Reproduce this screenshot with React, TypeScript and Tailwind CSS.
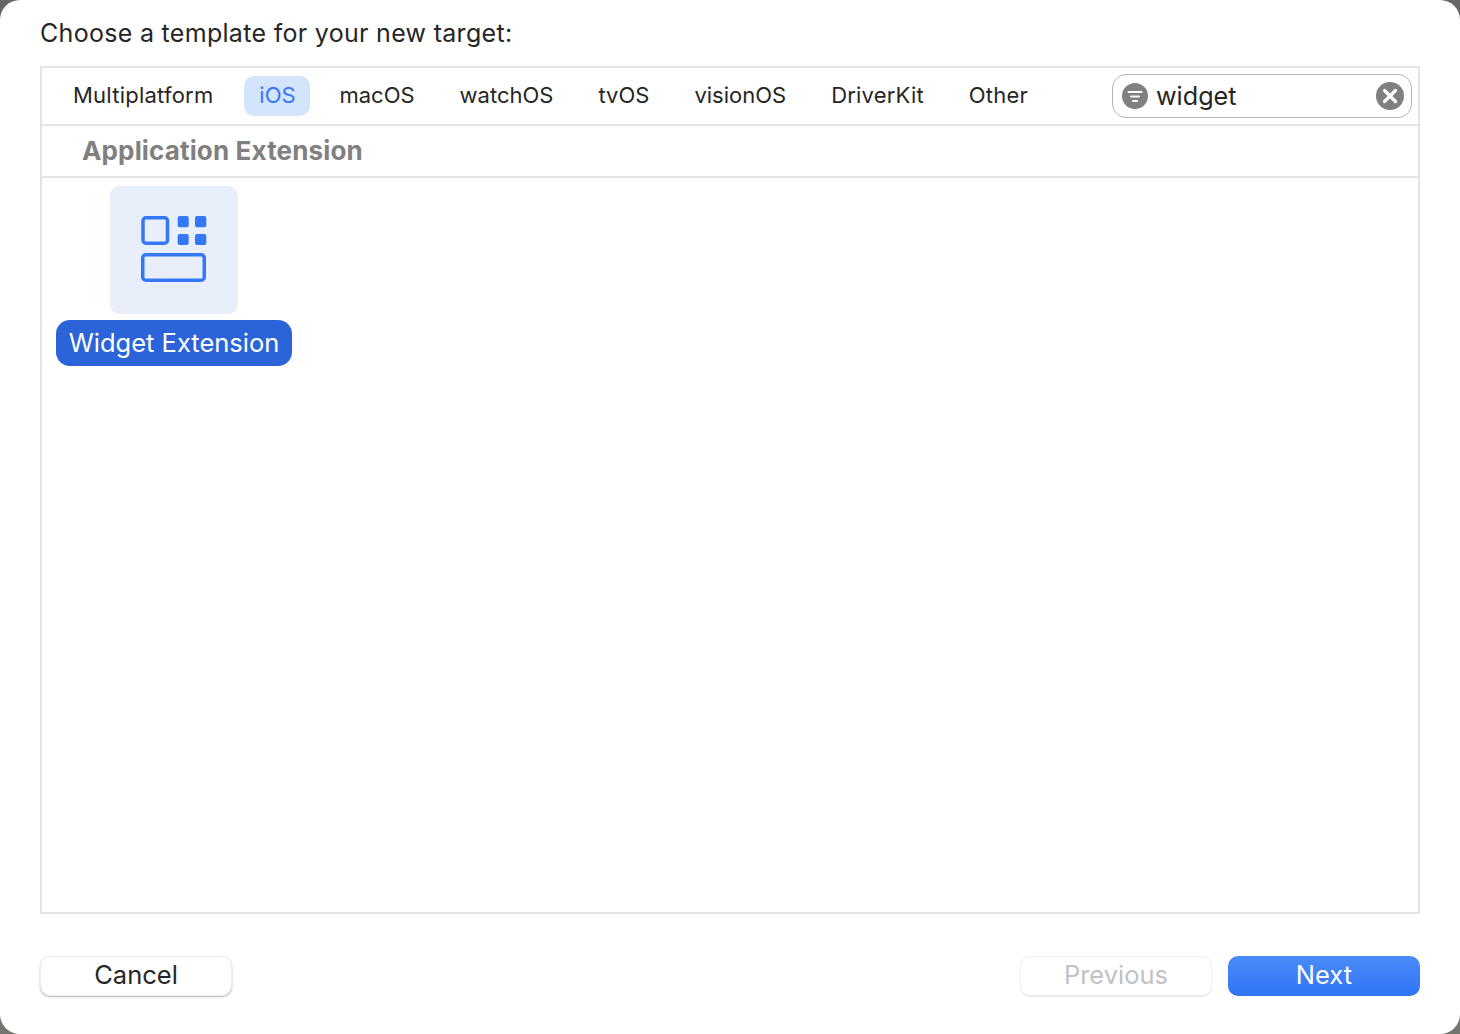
const tabs = ["Multiplatform", "iOS", "macOS", "watchOS", "tvOS", "visionOS", "DriverKit", "Other"];

export default function App() {
  return (
    <div className="h-[1034px] w-[1460px] overflow-hidden bg-gradient-to-b from-[#666666] to-[#77756f] font-['Inter','Liberation_Sans',sans-serif] text-[#262626]">
      <div className="flex h-full flex-col rounded-[20px] bg-white px-10 pb-[38px] pt-[17px]">
        <h1 className="h-[33px] text-[25px] font-normal leading-[33px] tracking-[0.3px]">Choose a template for your new target:</h1>
        <div className="mt-[16px] flex min-h-0 flex-1 flex-col border-2 border-[#e4e4e4]">
          <div className="flex h-[58px] shrink-0 items-center border-b-2 border-[#e4e4e4] pl-4 pr-[6px]">
            <nav className="flex gap-[15px]">
              {tabs.map((t) => (
                <span
                  key={t}
                  className={
                    t === "iOS"
                      ? "-mr-[1px] ml-[1px] flex h-10 w-[66px] items-center justify-center rounded-[10px] bg-[#d4e4fd] pb-[2px] text-[22px] text-[#3478f6]"
                      : t === "Multiplatform"
                        ? "flex h-10 items-center px-[15px] pb-[2px] text-[22px] tracking-[0.23px]"
                        : t === "DriverKit" || t === "Other"
                          ? "flex h-10 items-center px-[15px] pb-[2px] text-[22px] tracking-[0.2px]"
                          : "flex h-10 items-center px-[15px] pb-[2px] text-[22px]"
                  }
                >
                  {t}
                </span>
              ))}
            </nav>
            <div className="ml-auto flex h-11 w-[300px] items-center rounded-[14px] border border-[#b4b4b4] pl-[9px] pr-[7px]">
              <svg width="26" height="26" viewBox="0 0 26 26" className="shrink-0">
                <circle cx="13" cy="13" r="13" fill="#808080" />
                <path d="M6.500 9h13M9 13.500h8M11 18h4" stroke="#fff" strokeWidth="2" strokeLinecap="round" />
              </svg>
              <span className="ml-[8px] mt-[1px] text-[25.200px] leading-none">widget</span>
              <svg width="28" height="28" viewBox="0 0 28 28" className="ml-auto shrink-0">
                <circle cx="14" cy="14" r="14" fill="#808080" />
                <path d="M8.500 8.500l11 11M19.500 8.500l-11 11" stroke="#fff" strokeWidth="3.200" strokeLinecap="round" />
              </svg>
            </div>
          </div>
          <div className="flex h-[52px] shrink-0 items-center border-b-2 border-[#e4e4e4] pb-[2px] pl-[40px] text-[26px] font-bold tracking-[0.15px] text-[#808080]">
            Application Extension
          </div>
          <div className="flex-1 pl-[14px] pt-2">
            <div className="flex w-[236px] flex-col items-center">
              <div className="flex h-32 w-32 items-center justify-center rounded-[10px] bg-[#e8eefa]">
                <svg width="68" height="68" viewBox="0 0 68 68" fill="none">
                  <rect x="3" y="1.750" width="24.500" height="25.500" rx="3" stroke="#3478f6" strokeWidth="3.500" />
                  <rect x="37.700" y="0" width="11" height="11.300" rx="2" fill="#3478f6" />
                  <rect x="55" y="0" width="11.300" height="11.300" rx="2" fill="#3478f6" />
                  <rect x="37.700" y="18" width="11" height="11" rx="2" fill="#3478f6" />
                  <rect x="55" y="18" width="11.300" height="11" rx="2" fill="#3478f6" />
                  <rect x="2.750" y="38.750" width="61.500" height="25.500" rx="3" stroke="#3478f6" strokeWidth="3.500" />
                </svg>
              </div>
              <div className="mt-[6px] flex h-[46px] w-[236px] items-center justify-center rounded-[14px] bg-[#2b63d9] text-[25.500px] text-white">
                Widget Extension
              </div>
            </div>
          </div>
        </div>
        <div className="mt-[42px] flex shrink-0 items-center">
          <button className="h-10 w-[192px] rounded-[10px] border border-[#ececec] bg-white pb-[2px] text-[25.500px] leading-none shadow-[0_1px_2px_rgba(0,0,0,0.3)]">Cancel</button>
          <button className="ml-auto h-10 w-[192px] rounded-[10px] border border-[#f0f0f0] bg-white pb-[2px] text-[25.500px] leading-none text-[#c2c2c2] shadow-[0_1px_1px_rgba(0,0,0,0.1)]">Previous</button>
          <button className="ml-4 h-10 w-[192px] rounded-[10px] bg-gradient-to-b from-[#4a8bf8] to-[#3174f6] pb-[2px] text-[25.500px] leading-none text-white">Next</button>
        </div>
      </div>
    </div>
  );
}
